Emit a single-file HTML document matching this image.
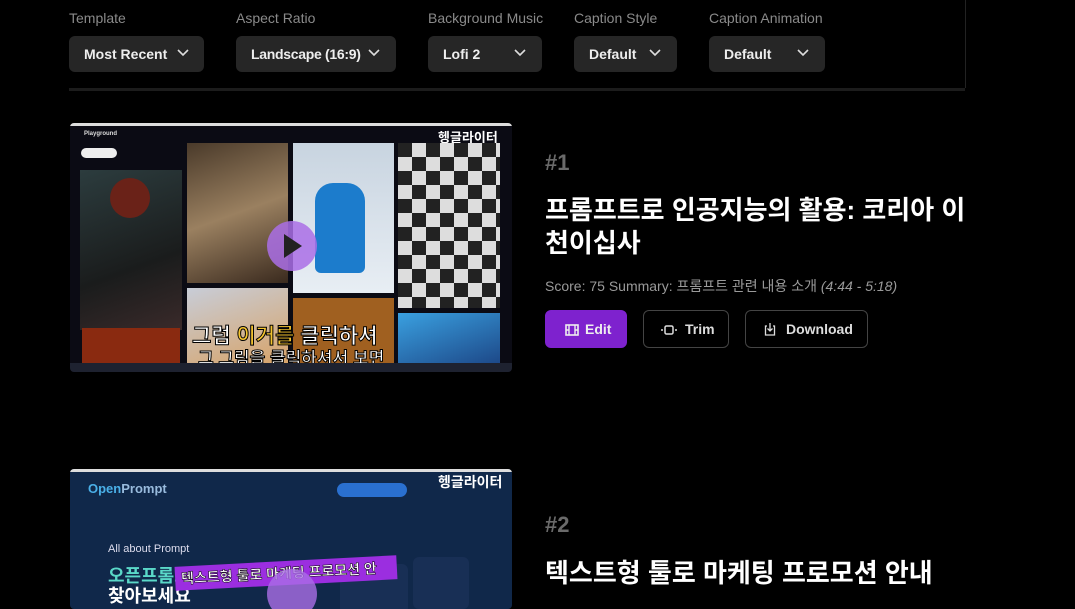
<!DOCTYPE html>
<html><head><meta charset="utf-8"><style>
*{margin:0;padding:0;box-sizing:border-box}
body{width:1075px;height:605px;background:#000;overflow:hidden;position:relative;font-family:"Liberation Sans","Noto Sans CJK KR",sans-serif;color:#fff}
.lbl{position:absolute;top:10px;font-size:14px;color:#8a8a8a}
.sel{position:absolute;top:36px;height:36px;background:#262626;border-radius:6px;font-size:14px;font-weight:bold;color:#eee;line-height:36px;padding-left:15px}
.sel svg{position:absolute;top:13px}
.abs{position:absolute}
.btn{position:absolute;top:310px;height:38px;border:1px solid #444;border-radius:6px;font-size:14px;font-weight:bold;color:#ddd;line-height:36px}
</style></head><body>
<div class="abs" style="left:965px;top:0;width:1px;height:88px;background:#222"></div>
<div class="abs" style="left:69px;top:88px;width:896px;height:3px;background:#1c1c1c"></div>

<div class="lbl" style="left:69px">Template</div>
<div class="lbl" style="left:236px">Aspect Ratio</div>
<div class="lbl" style="left:428px">Background Music</div>
<div class="lbl" style="left:574px">Caption Style</div>
<div class="lbl" style="left:709px">Caption Animation</div>
<div class="sel" style="left:69px;width:135px">Most Recent<svg style="left:108px" width="12" height="8" viewBox="0 0 12 8"><path d="M1 1l5 5 5-5" stroke="#ddd" stroke-width="1.6" fill="none"/></svg></div>
<div class="sel" style="left:236px;width:160px;letter-spacing:-0.3px">Landscape (16:9)<svg style="left:132px" width="12" height="8" viewBox="0 0 12 8"><path d="M1 1l5 5 5-5" stroke="#ddd" stroke-width="1.6" fill="none"/></svg></div>
<div class="sel" style="left:428px;width:114px">Lofi 2<svg style="left:86px" width="12" height="8" viewBox="0 0 12 8"><path d="M1 1l5 5 5-5" stroke="#ddd" stroke-width="1.6" fill="none"/></svg></div>
<div class="sel" style="left:574px;width:103px">Default<svg style="left:75px" width="12" height="8" viewBox="0 0 12 8"><path d="M1 1l5 5 5-5" stroke="#ddd" stroke-width="1.6" fill="none"/></svg></div>
<div class="sel" style="left:709px;width:116px">Default<svg style="left:88px" width="12" height="8" viewBox="0 0 12 8"><path d="M1 1l5 5 5-5" stroke="#ddd" stroke-width="1.6" fill="none"/></svg></div>

<!-- thumb 1 -->
<div class="abs" style="left:70px;top:123px;width:442px;height:249px;background:#0b0b14;border-radius:4px;overflow:hidden">
 <div class="abs" style="left:0;top:0;width:442px;height:3px;background:#ddd"></div>
 <div class="abs" style="left:14px;top:8px;font-size:6px;color:#ddd;font-weight:bold">Playground</div>
 <div class="abs" style="left:368px;top:4px;font-size:13px;font-weight:bold;color:#fff">헹글라이터</div>
 <div class="abs" style="left:11px;top:25px;width:36px;height:10px;background:#eee;border-radius:5px"></div>
 <div class="abs" style="left:10px;top:47px;width:102px;height:160px;background:linear-gradient(160deg,#2c3c3e,#1a1c1c 60%,#3a2a2a)"></div>
 <div class="abs" style="left:40px;top:55px;width:40px;height:40px;border-radius:50%;background:#6a2218"></div>
 <div class="abs" style="left:117px;top:20px;width:101px;height:140px;background:linear-gradient(160deg,#4a3a2a,#9a8060 50%,#3a2a1e)"></div>
 <div class="abs" style="left:117px;top:165px;width:101px;height:84px;background:linear-gradient(160deg,#c8cdd8,#d8a060)"></div>
 <div class="abs" style="left:223px;top:20px;width:101px;height:150px;background:linear-gradient(180deg,#c8d4e0,#e8eef4)"></div>
 <div class="abs" style="left:245px;top:60px;width:50px;height:90px;background:#1c7ccc;border-radius:18px 18px 6px 6px"></div>
 <div class="abs" style="left:223px;top:175px;width:101px;height:74px;background:#a06020"></div>
 <div class="abs" style="left:328px;top:20px;width:102px;height:165px;background:repeating-conic-gradient(#ddd 0 25%,#222 0 50%) 0 0/28px 28px"></div>
 <div class="abs" style="left:328px;top:190px;width:102px;height:59px;background:linear-gradient(160deg,#3aa0e0,#1a4080)"></div>
 <div class="abs" style="left:12px;top:205px;width:98px;height:38px;background:#8a2a10"></div>
 <div class="abs" style="left:197px;top:98px;width:50px;height:50px;border-radius:50%;background:rgba(170,110,230,.85)"></div>
 <svg class="abs" style="left:212px;top:110px" width="22" height="26"><path d="M2 1L20 13 2 25z" fill="#222"/></svg>
 <div class="abs" style="left:122px;top:197px;font-size:21px;font-weight:bold;color:#fff;-webkit-text-stroke:1px #000;white-space:nowrap">그럼 <span style="color:#f4c430">이거를</span> 클릭하셔</div>
 <div class="abs" style="left:128px;top:221px;font-size:17px;font-weight:bold;color:#fff;-webkit-text-stroke:1px #000;white-space:nowrap">그 그림을 클릭하셔서 보면</div>
 <div class="abs" style="left:0;top:240px;width:442px;height:9px;background:#1e2230"></div>
</div>

<div class="abs" style="left:545px;top:150px;font-size:22px;font-weight:bold;color:#6a6a6a">#1</div>
<div class="abs" style="left:545px;top:194px;width:425px;font-size:26px;font-weight:bold;line-height:33px">프롬프트로 인공지능의 활용: 코리아 이 천이십사</div>
<div class="abs" style="left:545px;top:276px;font-size:14px;color:#9a9a9a">Score: 75 Summary: 프롬프트 관련 내용 소개 <i>(4:44 - 5:18)</i></div>
<div class="btn" style="left:545px;width:82px;background:#7e22ce;border-color:#7e22ce;color:#eee;padding-left:19px"><svg style="vertical-align:-2px;margin-right:6px" width="14" height="12" viewBox="0 0 14 12"><rect x="1" y="1" width="12" height="10" fill="none" stroke="#eee" stroke-width="1.6"/><path d="M4 1v10M10 1v10M1 6h3M10 6h3" stroke="#eee" stroke-width="1.4"/></svg>Edit</div>
<div class="btn" style="left:643px;width:86px;padding-left:17px"><svg style="vertical-align:-1px;margin-right:8px" width="16" height="10" viewBox="0 0 16 10"><rect x="4" y="1" width="8" height="8" rx="1.5" fill="none" stroke="#ddd" stroke-width="1.5"/><path d="M0 5h2M14 5h2" stroke="#ddd" stroke-width="1.5"/></svg>Trim</div>
<div class="btn" style="left:745px;width:123px;padding-left:18px"><svg style="vertical-align:-2px;margin-right:10px" width="12" height="14" viewBox="0 0 12 14"><path d="M3 4H1.5v9h9V4H9M6 1v8M3.5 6.5L6 9l2.5-2.5" fill="none" stroke="#ddd" stroke-width="1.3"/></svg>Download</div>

<!-- thumb 2 -->
<div class="abs" style="left:70px;top:469px;width:442px;height:140px;background:#10284a;border-radius:4px;overflow:hidden">
 <div class="abs" style="left:0;top:0;width:442px;height:3px;background:#ddd"></div>
 <div class="abs" style="left:18px;top:12px;font-size:13px;font-weight:bold;color:#9bd"><span style="color:#4ab0e8">Open</span>Prompt</div>
 <div class="abs" style="left:267px;top:14px;width:70px;height:14px;background:#2a70d0;border-radius:7px"></div>
 <div class="abs" style="left:368px;top:3px;font-size:14px;font-weight:bold;color:#fff">헹글라이터</div>
 <div class="abs" style="left:38px;top:74px;font-size:11px;color:#dde">All about Prompt</div>
 <div class="abs" style="left:38px;top:93px;font-size:18px;font-weight:bold;color:#5ad8c8">오픈프롬프트<span style="color:#fff">에서</span></div>
 <div class="abs" style="left:38px;top:113px;font-size:18px;font-weight:bold;color:#fff">찾아보세요</div>
 <div class="abs" style="left:270px;top:95px;width:68px;height:50px;background:#182f55;border-radius:6px"></div>
 <div class="abs" style="left:343px;top:88px;width:56px;height:52px;background:#182f55;border-radius:6px"></div>
 <div class="abs" style="left:105px;top:92px;width:222px;height:24px;background:#9b2ee0;transform:rotate(-3deg);font-size:14px;font-weight:bold;color:#fff;line-height:24px;padding-left:6px;white-space:nowrap;-webkit-text-stroke:.5px #000">텍스트형 툴로 마케팅 프로모션 안</div>
 <div class="abs" style="left:197px;top:100px;width:50px;height:50px;border-radius:50%;background:rgba(170,110,230,.8)"></div>
</div>
<div class="abs" style="left:545px;top:512px;font-size:22px;font-weight:bold;color:#6a6a6a">#2</div>
<div class="abs" style="left:545px;top:557px;font-size:26px;font-weight:bold;line-height:33px">텍스트형 툴로 마케팅 프로모션 안내</div>
</body></html>
